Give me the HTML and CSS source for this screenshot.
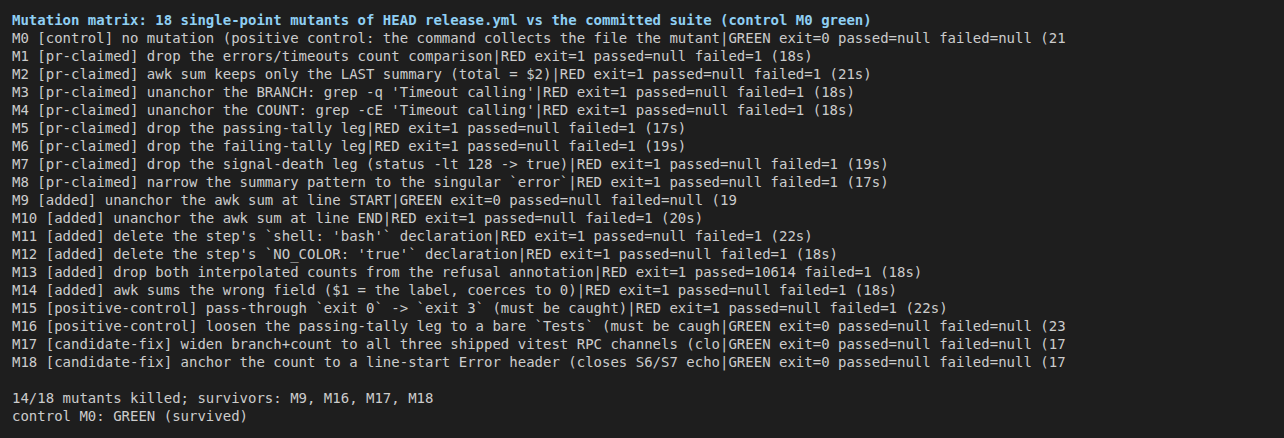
FILE: index.html
```html
<!DOCTYPE html>
<html>
<head>
<meta charset="utf-8">
<link rel="stylesheet" href="styles.css">
</head>
<body>
<pre class="term"><span class="title">Mutation matrix: 18 single-point mutants of HEAD release.yml vs the committed suite (control M0 green)</span>
M0 [control] no mutation (positive control: the command collects the file the mutant|GREEN exit=0 passed=null failed=null (21
M1 [pr-claimed] drop the errors/timeouts count comparison|RED exit=1 passed=null failed=1 (18s)
M2 [pr-claimed] awk sum keeps only the LAST summary (total = $2)|RED exit=1 passed=null failed=1 (21s)
M3 [pr-claimed] unanchor the BRANCH: grep -q 'Timeout calling'|RED exit=1 passed=null failed=1 (18s)
M4 [pr-claimed] unanchor the COUNT: grep -cE 'Timeout calling'|RED exit=1 passed=null failed=1 (18s)
M5 [pr-claimed] drop the passing-tally leg|RED exit=1 passed=null failed=1 (17s)
M6 [pr-claimed] drop the failing-tally leg|RED exit=1 passed=null failed=1 (19s)
M7 [pr-claimed] drop the signal-death leg (status -lt 128 -&gt; true)|RED exit=1 passed=null failed=1 (19s)
M8 [pr-claimed] narrow the summary pattern to the singular `error`|RED exit=1 passed=null failed=1 (17s)
M9 [added] unanchor the awk sum at line START|GREEN exit=0 passed=null failed=null (19
M10 [added] unanchor the awk sum at line END|RED exit=1 passed=null failed=1 (20s)
M11 [added] delete the step's `shell: 'bash'` declaration|RED exit=1 passed=null failed=1 (22s)
M12 [added] delete the step's `NO_COLOR: 'true'` declaration|RED exit=1 passed=null failed=1 (18s)
M13 [added] drop both interpolated counts from the refusal annotation|RED exit=1 passed=10614 failed=1 (18s)
M14 [added] awk sums the wrong field ($1 = the label, coerces to 0)|RED exit=1 passed=null failed=1 (18s)
M15 [positive-control] pass-through `exit 0` -&gt; `exit 3` (must be caught)|RED exit=1 passed=null failed=1 (22s)
M16 [positive-control] loosen the passing-tally leg to a bare `Tests` (must be caugh|GREEN exit=0 passed=null failed=null (23
M17 [candidate-fix] widen branch+count to all three shipped vitest RPC channels (clo|GREEN exit=0 passed=null failed=null (17
M18 [candidate-fix] anchor the count to a line-start Error header (closes S6/S7 echo|GREEN exit=0 passed=null failed=null (17

14/18 mutants killed; survivors: M9, M16, M17, M18
control M0: GREEN (survived)</pre>
</body>
</html>
```
FILE: styles.css
```css
html, body {
  margin: 0;
  background: #1e1e1e;
}
body {
  padding: 11px 12px;
}
.term {
  margin: 0;
  font-family: "DejaVu Sans Mono", monospace;
  font-size: 14px;
  line-height: 18px;
  color: #cccccc;
  white-space: pre;
}
.title {
  font-weight: bold;
  color: #8fcff3;
}
```
